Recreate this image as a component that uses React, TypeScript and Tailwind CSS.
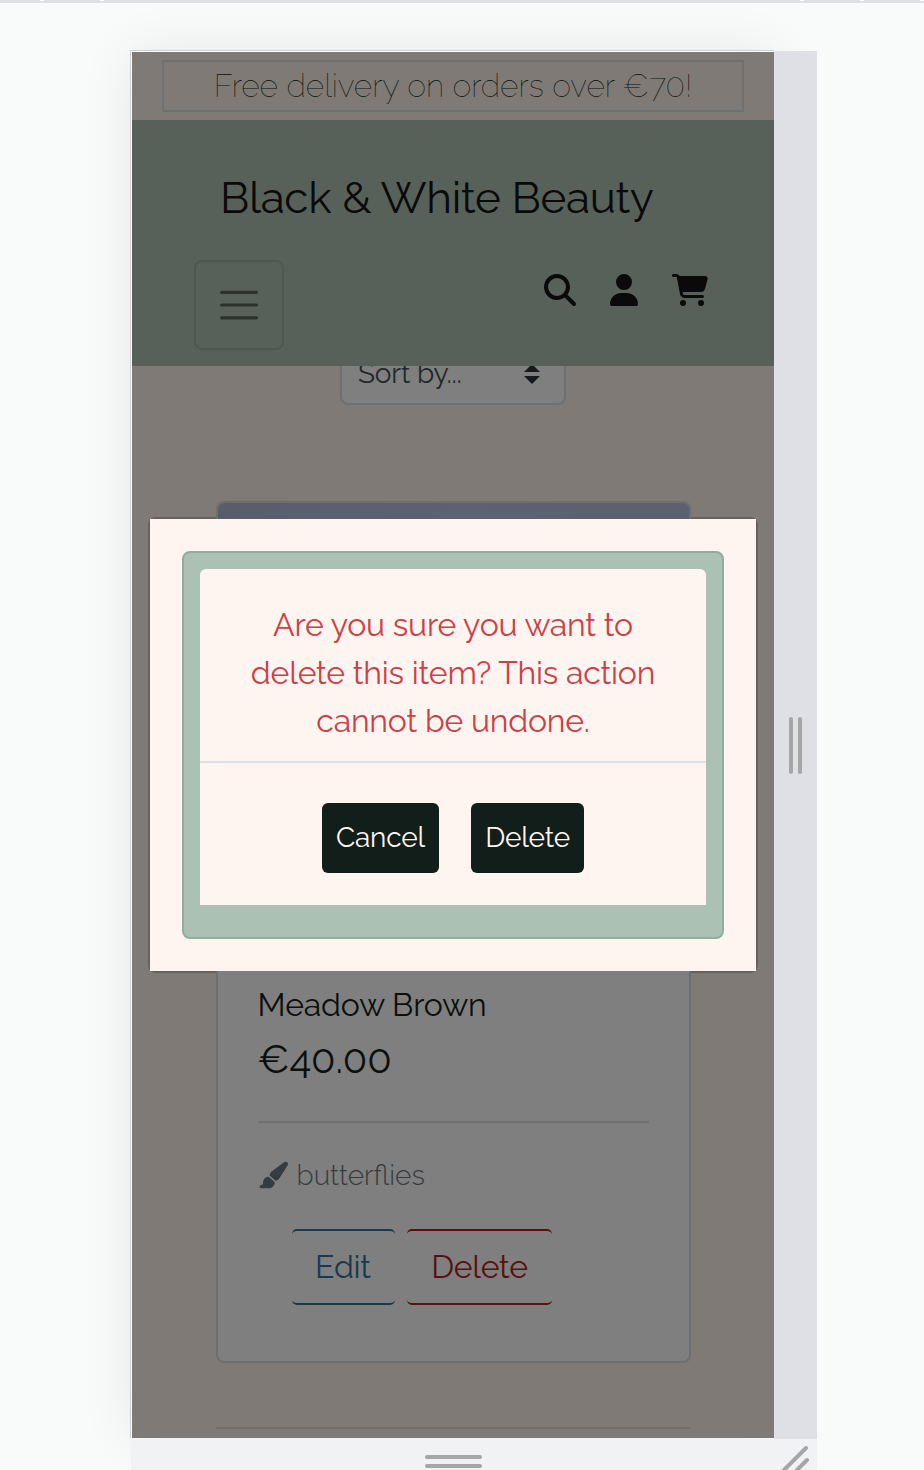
import type { ReactNode } from "react";
import { FaCartShopping, FaMagnifyingGlass, FaPaintbrush, FaUser } from "react-icons/fa6";

function RulerStrip() {
  return (
    <div className="flex h-[3px] shrink-0 items-start bg-[#dfe0e5]">
      <i className="ml-10 h-px w-1 bg-white" />
      <i className="ml-14 h-px w-1 bg-white" />
      <i className="ml-[696px] h-px w-1 bg-white" />
      <i className="ml-14 h-px w-1 bg-white" />
      <i className="ml-14 h-px w-1 bg-white" />
    </div>
  );
}

function NavBar() {
  return (
    <nav className="h-[246px] bg-[#576159] pt-[49px] text-[#0a0a0a]">
      <h1 className="pl-[88px] text-[44px] leading-[58px] font-normal tracking-[-0.3px] whitespace-nowrap">
        Black &amp; White Beauty
      </h1>
      <div className="mt-[33px] flex items-start justify-between pr-[66.5px] pl-[62px]">
        <button className="flex size-[90px] items-center justify-center rounded-lg border-2 border-[#4e5850]">
          <svg width="38" height="30" viewBox="0 0 38 30" fill="none" stroke="#2b322e" strokeWidth="3.2" strokeLinecap="round">
            <path d="M1.6 2.3H36.4M1.6 15H36.4M1.6 27.8H36.4" />
          </svg>
        </button>
        <div className="mt-3.5 flex gap-[34px]">
          <FaMagnifyingGlass className="size-8" />
          <FaUser className="h-8 w-7" />
          <FaCartShopping className="h-8 w-9" />
        </div>
      </div>
    </nav>
  );
}

function SortSelect() {
  return (
    <div className="flex h-[39px] items-end justify-center overflow-hidden">
      <div className="flex h-[76px] w-[226px] shrink-0 items-center justify-between rounded-lg border-2 border-[#6d7073] bg-[#7f7f7f] pt-3.5 pr-6 pl-4 text-[#24282b]">
        <span className="text-[28px] tracking-[-0.2px]">Sort by...</span>
        <svg width="16" height="20" viewBox="0 0 16 20" fill="#17191c">
          <path d="M0 8 8 0 16 8ZM0 12H16L8 20Z" />
        </svg>
      </div>
    </div>
  );
}

function OutlineButton({ className, children }: { className: string; children: ReactNode }) {
  return (
    <button className={`h-[76px] rounded-[5px] border-x-0 border-y-2 text-[32px] whitespace-nowrap ${className}`}>
      {children}
    </button>
  );
}

function ProductCard() {
  return (
    <article className="mx-auto mt-24 flex h-[862px] w-[475px] flex-col overflow-hidden rounded-lg border-2 border-[#6d6e6e] bg-[#7f7f7f]">
      <div className="h-[462px] bg-linear-to-r from-[#575d6b] via-[#5c6272] to-[#5b616e]" />
      <div className="px-10 pt-[18px] text-[#0b0f0d]">
        <h2 className="text-[32px] leading-[44px] tracking-[-0.15px]">Meadow Brown</h2>
        <p className="mt-0.5 text-[40px] leading-[60px] tracking-[-0.15px]">€40.00</p>
        <hr className="mt-8 border-t-2 border-[#707172]" />
        <p className="mt-8 flex h-10 items-center gap-2 text-[28px] text-[#363b3f]">
          <FaPaintbrush className="size-[30px]" />
          <span className="pt-0.5 pl-px font-light">butterflies</span>
        </p>
        <div className="mt-[34px] ml-[34px] flex gap-3">
          <OutlineButton className="w-[103px] border-[#19394f] tracking-[-0.2px] text-[#19394f]">Edit</OutlineButton>
          <OutlineButton className="w-[145px] border-[#571110] pl-px tracking-[-0.3px] text-[#571110]">Delete</OutlineButton>
        </div>
      </div>
    </article>
  );
}

function DeleteDialog() {
  return (
    <section
      role="dialog"
      className="absolute top-[467px] left-[18px] h-[452px] w-[606px] bg-[#fff5f0] p-8"
    >
      <div className="absolute -inset-0.5 -z-10 rounded-lg bg-black/20" />
      <div className="h-[388px] rounded-lg border-2 border-[#94ac9f] bg-[#aac1b4] px-4 pt-4">
        <div className="h-[336px] rounded-t-md bg-[#fff5f0]">
          <p className="flex h-[192px] flex-col items-center pt-8 text-center text-[32px] leading-[48px] tracking-[-0.2px] whitespace-nowrap text-[#cd3f47]">
            <span>Are you sure you want to</span>
            <span>delete this item? This action</span>
            <span>cannot be undone.</span>
          </p>
          <hr className="border-t-2 border-[#dee0e8]" />
          <div className="flex justify-center gap-8 pt-10 text-[28px] tracking-[-0.2px] text-[#fff5f0]">
            <button className="h-[70px] w-[117px] rounded-md bg-[#121e1a]">Cancel</button>
            <button className="h-[70px] w-[113px] rounded-md bg-[#121e1a]">Delete</button>
          </div>
        </div>
      </div>
    </section>
  );
}

export default function App() {
  return (
    <div className="flex h-[1470px] w-[924px] flex-col overflow-hidden bg-[#f8fbfa] font-['Raleway','Lato',sans-serif]">
      <RulerStrip />
      <div className="mt-[47px] ml-[130px] flex items-start">
        <div className="h-[1388px] w-[644px] border-t border-l border-[#cfcfd6] bg-white pt-px pl-px shadow-[0_0_50px_rgba(0,0,0,0.08)]">
          <main className="relative isolate h-[1386px] w-[642px] overflow-hidden bg-[#7f7a76]">
            <header className="flex h-[68px] justify-center pt-2">
              <div className="flex h-[52px] w-[582px] items-center justify-center border-2 border-[#6f7072] pb-px text-[32px] font-thin whitespace-nowrap text-[#04100b]">
                Free delivery on orders over €70!
              </div>
            </header>
            <NavBar />
            <SortSelect />
            <ProductCard />
            <hr className="mx-auto mt-16 w-[475px] border-t-2 border-[#716d6a]" />
            <DeleteDialog />
          </main>
        </div>
        <div className="z-10 mt-px flex h-[1388px] w-[43px] items-center justify-center gap-[5px] bg-[#dfe0e5]">
          <i className="h-[57px] w-1 rounded-full bg-[#a6a6a6]" />
          <i className="h-[57px] w-1 rounded-full bg-[#a6a6a6]" />
        </div>
      </div>
      <footer className="z-10 ml-[131px] flex h-8 w-[686px] shrink-0 items-start bg-[#f1f2f4]">
        <div className="mt-4 ml-[294px] flex w-[57px] flex-col gap-[5px]">
          <i className="h-1 rounded-full bg-[#a6a6a6]" />
          <i className="h-1 rounded-full bg-[#a6a6a6]" />
        </div>
        <svg className="mt-[7px] ml-[298px]" width="32" height="24" viewBox="0 0 32 24" fill="none" stroke="#a6a6a6" strokeWidth="4" strokeLinecap="round">
          <path d="M26 2 2 26M27 14 13 28" />
        </svg>
      </footer>
    </div>
  );
}
